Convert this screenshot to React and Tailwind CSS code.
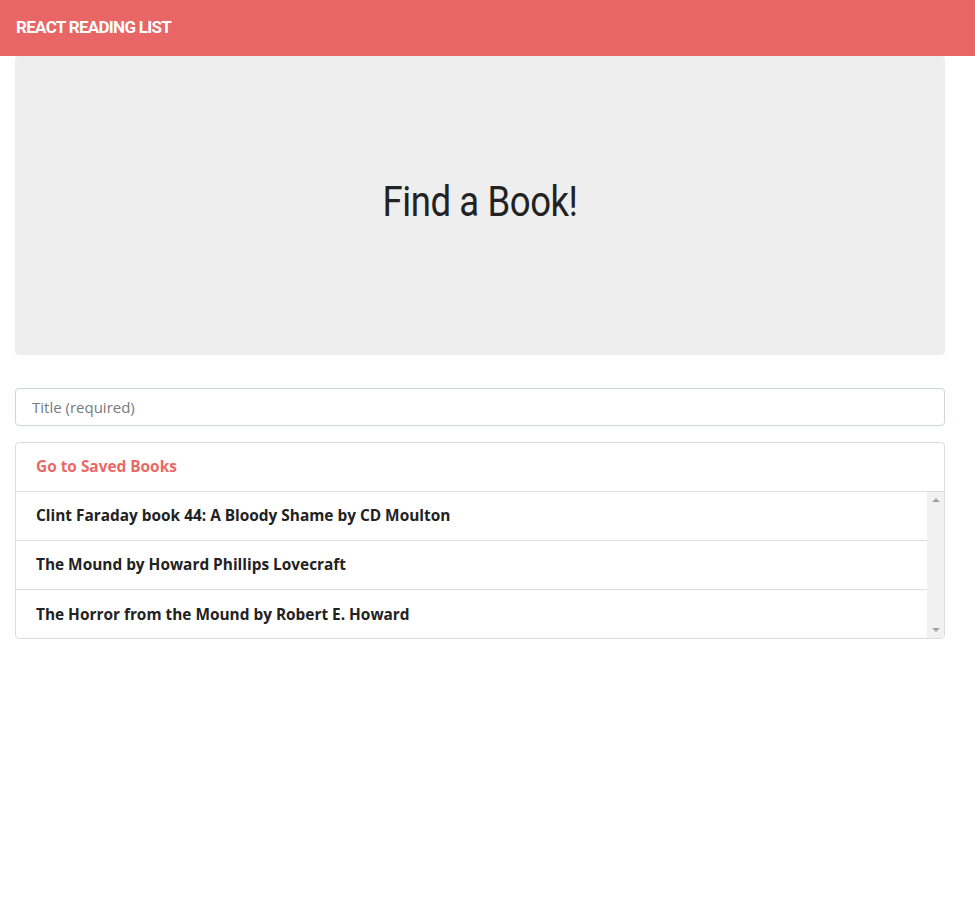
import { useState } from 'react';

const books = [
    'Clint Faraday book 44: A Bloody Shame by CD Moulton',
    'The Mound by Howard Phillips Lovecraft',
    'The Horror from the Mound by Robert E. Howard',
];

export default function App() {
    const [title, setTitle] = useState('');

    return (
        <div className="min-h-screen bg-white text-[#222] font-['Open_Sans','Noto_Sans',sans-serif]">
            <nav className="h-14 bg-[#e86666] flex items-center px-4">
                <span className="text-white text-[17px] font-bold uppercase tracking-[-0.7px] font-['Roboto',sans-serif]">
                    React Reading List
                </span>
            </nav>

            <div className="w-[930px] ml-[15px]">
                <div className="h-[299px] bg-[#eeeeee] rounded flex items-center justify-center pb-2 mb-[33px]">
                    <h1 className="inline-block scale-x-[0.87] text-[42px] leading-none text-[#222] tracking-[-0.5px] font-['Roboto',sans-serif]">
                        Find a Book!
                    </h1>
                </div>

                <input
                    value={title}
                    onChange={(e) => setTitle(e.target.value)}
                    placeholder="Title (required)"
                    className="w-full h-[38px] px-4 border border-[#ced4da] rounded text-[15px] text-[#495057] placeholder:text-[#757b81] focus:outline-none mb-4"
                />

                <div className="border border-[#dddddd] rounded">
                    <div className="h-[49px] px-5 flex items-center border-b border-[#dddddd]">
                        <a href="#" className="text-[#eb6864] font-bold text-[15.4px]">Go to Saved Books</a>
                    </div>
                    <div className="flex h-[146px]">
                        <ul className="flex-1">
                            {books.map((b, i) => (
                                <li
                                    key={b}
                                    className={`h-[49px] px-5 flex items-center font-bold text-[15.4px] ${i < books.length - 1 ? 'border-b border-[#dddddd]' : ''}`}
                                >
                                    {b}
                                </li>
                            ))}
                        </ul>
                        <div className="w-[17px] bg-[#f1f1f1] flex flex-col items-center justify-between py-[6px]">
                            <span className="w-0 h-0 border-x-[4px] border-x-transparent border-b-[4px] border-b-[#a3a3a3]" />
                            <span className="w-0 h-0 border-x-[4px] border-x-transparent border-t-[4px] border-t-[#a3a3a3]" />
                        </div>
                    </div>
                </div>
            </div>
        </div>
    );
}
